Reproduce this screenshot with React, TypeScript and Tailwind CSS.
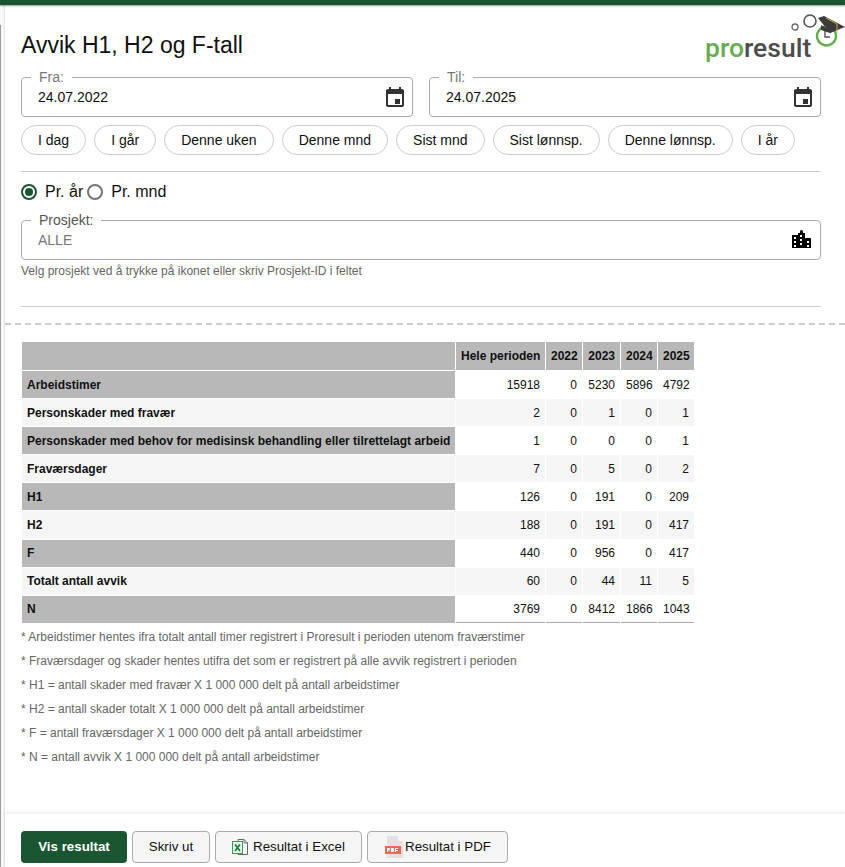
import { useState } from 'react';

const chips = ['I dag', 'I går', 'Denne uken', 'Denne mnd', 'Sist mnd', 'Sist lønnsp.', 'Denne lønnsp.', 'I år'];

const years = ['Hele perioden', '2022', '2023', '2024', '2025'];
const yearWidths = ['w-[89px]', 'w-[36px]', 'w-[37px]', 'w-[36px]', 'w-[36px]'];

const rows = [
  { label: 'Arbeidstimer', values: [15918, 0, 5230, 5896, 4792] },
  { label: 'Personskader med fravær', values: [2, 0, 1, 0, 1] },
  { label: 'Personskader med behov for medisinsk behandling eller tilrettelagt arbeid', values: [1, 0, 0, 0, 1] },
  { label: 'Fraværsdager', values: [7, 0, 5, 0, 2] },
  { label: 'H1', values: [126, 0, 191, 0, 209] },
  { label: 'H2', values: [188, 0, 191, 0, 417] },
  { label: 'F', values: [440, 0, 956, 0, 417] },
  { label: 'Totalt antall avvik', values: [60, 0, 44, 11, 5] },
  { label: 'N', values: [3769, 0, 8412, 1866, 1043] },
];

const notes = [
  '* Arbeidstimer hentes ifra totalt antall timer registrert i Proresult i perioden utenom fraværstimer',
  '* Fraværsdager og skader hentes utifra det som er registrert på alle avvik registrert i perioden',
  '* H1 = antall skader med fravær X 1 000 000 delt på antall arbeidstimer',
  '* H2 = antall skader totalt X 1 000 000 delt på antall arbeidstimer',
  '* F = antall fraværsdager X 1 000 000 delt på antall arbeidstimer',
  '* N = antall avvik X 1 000 000 delt på antall arbeidstimer',
];

function CalendarIcon() {
  return (
    <svg width="24" height="24" viewBox="0 0 24 24" fill="#333">
      <path d="M19 4h-1V2h-2v2H8V2H6v2H5c-1.1 0-2 .9-2 2v14c0 1.1.9 2 2 2h14c1.1 0 2-.9 2-2V6c0-1.1-.9-2-2-2zm0 16H5V9h14v11z" />
      <rect x="12" y="14" width="5" height="5" />
    </svg>
  );
}

function BuildingIcon() {
  return (
    <svg width="19" height="18" viewBox="0 0 19 18" className="mr-[4px] -mt-[3px]">
      <path
        fillRule="evenodd"
        fill="#000"
        d="M8 3V1.5C8 .7 8.7 0 9.5 0S11 .7 11 1.5V3h2v5h6v10H0V5h6V3h2zM2 7v2h2V7H2zm6-2v2h2V5H8zm0 4v2h2V9H8zm-6 2v2h2v-2H2zm13 0v2h2v-2h-2zM2 15v2h2v-2H2zm6-2v2h2v-2H8zm7 2v2h2v-2h-2z"
      />
    </svg>
  );
}

function ExcelIcon() {
  return (
    <svg width="16" height="16" viewBox="0 0 16 16" className="shrink-0">
      <path d="M6 .5h6l3.5 3.5v11.5H6z" fill="#fff" stroke="#666" />
      <path d="M12 .5V4h3.5" fill="none" stroke="#666" />
      <rect x=".5" y="2.5" width="10" height="12" fill="#e9f4ea" stroke="#3d9a55" />
      <path d="M3 5.5l5 6.5M8 5.5l-5 6.5" stroke="#1d7a36" strokeWidth="1.7" />
    </svg>
  );
}

function PdfIcon() {
  return (
    <svg width="18" height="22" viewBox="0 0 18 22" className="shrink-0">
      <path d="M2 0h11l5 5v17H2z" fill="#e1e1e5" />
      <path d="M13 0l5 5h-5z" fill="#f5f5f7" />
      <rect x="0" y="10" width="16" height="8" fill="#ee6552" />
      <path d="M2 12h3v2.5H3V16H2zM6 12h2.5l.5 1v2l-.5 1H6zM10 12h3v1h-2v1h2v1h-2v1h-1z" fill="#fff" />
    </svg>
  );
}

function Logo() {
  return (
    <div className="relative w-[141px] h-[58px] shrink-0">
      <span className="absolute left-[1px] top-[26px] text-[26.5px] leading-[34px] font-medium font-['Roboto',sans-serif] whitespace-nowrap">
        <span className="text-[#66ad52]">pro</span>
        <span className="text-[#4c4c4c]">result</span>
      </span>
      <svg className="absolute left-[86px] top-[8px]" width="55" height="40" viewBox="0 0 55 40">
        <circle cx="5" cy="14" r="3" fill="none" stroke="#666" strokeWidth="1.3" />
        <circle cx="20" cy="8" r="6" fill="none" stroke="#555" strokeWidth="1.6" />
        <circle cx="36.5" cy="23" r="9.5" fill="none" stroke="#66ad52" strokeWidth="2.4" />
        <path d="M35 17v7h5" fill="none" stroke="#555" strokeWidth="1.4" />
        <path d="M28 5l6-2 21 11-15 6z" fill="#3c3c3c" />
        <path d="M31 12v5l9 3 7-4v-4l-7 5z" fill="#3c3c3c" />
        <path d="M36 5l11 6v9" fill="none" stroke="#d9a441" strokeWidth="1" />
      </svg>
    </div>
  );
}

function Field({ label, value, muted, icon }: { label: string; value: string; muted?: boolean; icon: React.ReactNode }) {
  return (
    <fieldset className="flex-1 min-w-0 border border-[#aaa] rounded-[4px] pl-[16px] pr-[5px] pb-[7px]">
      <legend className={`-ml-[7px] px-[8px] text-[14px] leading-[16px] ${muted ? 'text-[#555]' : 'text-[#777]'}`}>{label}</legend>
      <div className="flex items-center justify-between h-[24px]">
        <span className={`text-[14px] ${muted ? 'text-[#777] mt-[1px]' : 'text-[#111]'}`}>{value}</span>
        {icon}
      </div>
    </fieldset>
  );
}

function Radio({ checked, label, onClick }: { checked: boolean; label: string; onClick: () => void }) {
  return (
    <button onClick={onClick} className="flex items-center gap-[8px] text-[16px] text-[#111]">
      <span className={`flex items-center justify-center w-[16px] h-[16px] rounded-full border-2 ${checked ? 'border-[#1a5632]' : 'border-[#767676]'}`}>
        {checked && <span className="w-[8px] h-[8px] rounded-full bg-[#1a5632]" />}
      </span>
      {label}
    </button>
  );
}

export default function App() {
  const [perYear, setPerYear] = useState(true);

  return (
    <div className="h-[867px] overflow-hidden bg-white font-['Liberation_Sans',Arial,sans-serif] flex flex-col">
      <div className="h-[5px] shrink-0 bg-[#1a5632] shadow-[0_1px_2px_rgba(0,0,0,0.4)] relative" />
      <div className="flex-1 min-h-0 flex">
        <div className="w-[5px] shrink-0 bg-[#fafafa] shadow-[inset_-1px_0_2px_rgba(0,0,0,0.1)] pt-[20px]">
          <div className="w-[1px] h-full bg-[#9a9a9a]" />
        </div>
        <div className="flex-1 min-w-0 flex flex-col">
          <div className="flex-1 flex flex-col min-h-0">
            <div className="pl-[16px] pr-[24px]">
              <div className="flex justify-between h-[64px]">
                <h1 className="text-[23px] leading-[28px] text-[#111] mt-[26px]">Avvik H1, H2 og F-tall</h1>
                <div className="-mr-[24px]">
                  <Logo />
                </div>
              </div>
              <div className="flex gap-[16px]">
                <Field label="Fra:" value="24.07.2022" icon={<CalendarIcon />} />
                <Field label="Til:" value="24.07.2025" icon={<CalendarIcon />} />
              </div>
              <div className="flex gap-[8px] mt-[8px]">
                {chips.map((chip) => (
                  <button key={chip} className="h-[30px] px-[16px] rounded-full border border-[#ccc] bg-white text-[14px] text-[#111]">
                    {chip}
                  </button>
                ))}
              </div>
              <hr className="mt-[16px] border-[#ccc]" />
              <div className="flex items-center gap-[4px] mt-[10px] h-[20px]">
                <Radio checked={perYear} label="Pr. år" onClick={() => setPerYear(true)} />
                <Radio checked={!perYear} label="Pr. mnd" onClick={() => setPerYear(false)} />
              </div>
              <div className="flex mt-[10px]">
                <Field label="Prosjekt:" value="ALLE" muted icon={<BuildingIcon />} />
              </div>
              <p className="text-[12px] leading-[14px] text-[#666] mt-[4px]">Velg prosjekt ved å trykke på ikonet eller skriv Prosjekt-ID i feltet</p>
              <hr className="mt-[28px] border-[#ccc]" />
            </div>
            <div className="mt-[16px] border-t-2 border-dashed border-[#ccc]" />
            <div className="pl-[16px] mt-[16px]">
              <table className="table-fixed w-[674px] border-separate border-spacing-[1px] text-[12px] leading-[14px] text-[#111]">
                <thead>
                  <tr className="h-[28px]">
                    <th className="bg-[#b8b8b8]" />
                    {years.map((year, i) => (
                      <th key={year} className={`${yearWidths[i]} bg-[#b8b8b8] px-[5px] text-right font-bold whitespace-nowrap`}>{year}</th>
                    ))}
                  </tr>
                </thead>
                <tbody>
                  {rows.map((row, i) => (
                    <tr key={row.label} className="h-[27.1px]">
                      <td className={`px-[5px] font-bold whitespace-nowrap ${i % 2 === 0 ? 'bg-[#b8b8b8]' : 'bg-[#f5f5f5]'}`}>{row.label}</td>
                      {row.values.map((value, j) => (
                        <td key={j} className={`px-[5px] text-right ${i % 2 === 0 ? 'bg-white' : 'bg-[#f5f5f5]'} ${i === rows.length - 1 ? 'border-b border-[#aaa]' : ''}`}>
                          {value}
                        </td>
                      ))}
                    </tr>
                  ))}
                </tbody>
              </table>
              <div className="text-[12px] leading-[14px] text-[#666] flex flex-col gap-[10px] pt-[6px]">
                {notes.map((note) => (
                  <p key={note}>{note}</p>
                ))}
              </div>
            </div>
          </div>
          <div className="h-[53px] shrink-0 shadow-[0_-2px_4px_rgba(0,0,0,0.08)] pl-[16px] pt-[17px] flex gap-[5px] items-start text-[13.33px]">
            <button className="h-[32px] w-[106px] rounded-[4px] bg-[#1a5632] text-white font-bold">Vis resultat</button>
            <button className="h-[32px] w-[78px] rounded-[4px] border border-[#aaa] bg-[#f5f5f5] text-[#111]">Skriv ut</button>
            <button className="h-[32px] w-[147px] rounded-[4px] border border-[#aaa] bg-[#f5f5f5] text-[#111] flex items-center pl-[16px] gap-[5px]">
              <ExcelIcon />
              Resultat i Excel
            </button>
            <button className="h-[32px] w-[141px] rounded-[4px] border border-[#aaa] bg-[#f5f5f5] text-[#111] flex items-center pl-[17px] gap-[2px]">
              <PdfIcon />
              Resultat i PDF
            </button>
          </div>
        </div>
      </div>
    </div>
  );
}
